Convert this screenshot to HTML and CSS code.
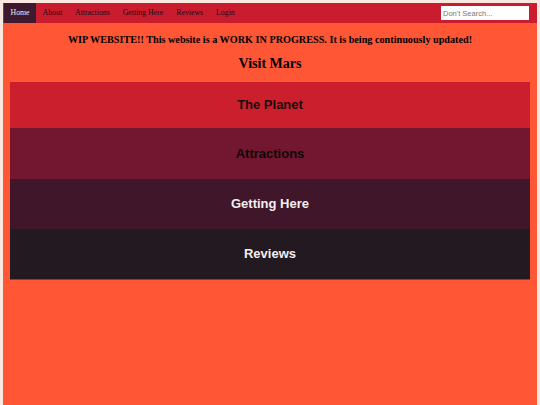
FILE: index.html
```html
<!DOCTYPE html>
<html lang="en">
<head>
  <meta charset="UTF-8">
  <meta name="viewport" content="width=device-width, initial-scale=1.0">
  <title>Visit Mars</title>
  <link rel="stylesheet" href="styles.css">
</head>
<body>
  <div class="page">
    <!-- Top navigation -->
    <nav class="topnav">
      <a class="active" href="#">Home</a>
      <a href="#">About</a>
      <a href="#">Attractions</a>
      <a href="#">Getting Here</a>
      <a href="#">Reviews</a>
      <a href="#">Login</a>
      <input class="search" type="text" placeholder="Don't Search...">
    </nav>

    <p class="notice">WIP WEBSITE!! This website is a WORK IN PROGRESS. It is being continuously updated!</p>
    <h1>Visit Mars</h1>

    <!-- Sections -->
    <div class="sections">
      <div class="section planet">The Planet</div>
      <div class="section attractions">Attractions</div>
      <div class="section getting">Getting Here</div>
      <div class="section reviews">Reviews</div>
    </div>
  </div>
</body>
</html>
```

FILE: styles.css
```css
/* General */
html {
  background: #fbe9e1;
}

body {
  margin: 3px 3px 0;
  font-family: "Liberation Serif", "Times New Roman", serif;
}

.page {
  background-color: #ff5635;
  min-height: calc(100vh - 3px);
  padding-bottom: 1px;
}

/* Navigation bar */
.topnav {
  display: flex;
  align-items: center;
  height: 20px;
  background-color: #c91d2f;
  padding-left: 1px;
}

.topnav a {
  color: #1a0a10;
  text-decoration: none;
  font-size: 7.8px;
  padding: 0 6.5px;
  line-height: 20px;
}

.topnav a.active {
  background-color: #3d1a2d;
  color: #f2e8ec;
}

.search {
  margin-left: auto;
  margin-right: 8px;
  width: 88px;
  height: 14px;
  box-sizing: border-box;
  border: none;
  padding: 0 2px;
  font-family: "Liberation Sans", Arial, sans-serif;
  font-size: 7.5px;
}

.search::placeholder {
  color: #777;
}

/* Header text */
.notice {
  text-align: center;
  font-weight: bold;
  font-size: 10.2px;
  margin: 11px 0 0;
}

h1 {
  text-align: center;
  font-size: 14px;
  margin: 11px 0 10px;
}

/* Coloured section blocks */
.sections {
  margin: 0 7px;
  border-bottom: 1px solid #a8302b;
}

.section {
  text-align: center;
  font-family: "Liberation Sans", Arial, sans-serif;
  font-weight: bold;
  font-size: 13px;
  height: 50px;
  line-height: 50px;
}

.planet {
  background-color: #cc1f2e;
  color: #1a0a0d;
  height: 46px;
  line-height: 46px;
}

.attractions {
  background-color: #731730;
  color: #0e0508;
  height: 51px;
  line-height: 51px;
}

.getting {
  background-color: #40162a;
  color: #f3eef0;
}

.reviews {
  background-color: #231920;
  color: #f3eef0;
}
```
